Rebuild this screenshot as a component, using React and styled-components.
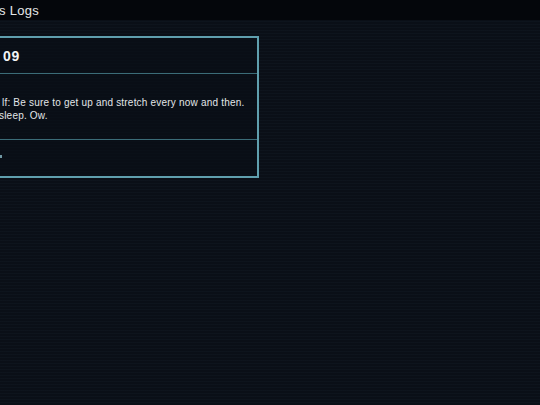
import React from 'react';
import styled, { createGlobalStyle } from 'styled-components';

const GlobalStyle = createGlobalStyle`
  html, body {
    margin: 0;
    padding: 0;
    height: 100%;
  }
  body {
    background-color: #0a0f17;
    background-image: repeating-linear-gradient(
      to bottom,
      rgba(120, 170, 200, 0.03) 0px,
      rgba(120, 170, 200, 0.03) 1px,
      transparent 1px,
      transparent 3px
    );
    color: #dfe3e6;
    font-family: "Liberation Sans", Arial, sans-serif;
    overflow: hidden;
  }
`;

const Screen = styled.div`
  display: flex;
  flex-direction: column;
  width: 540px;
  height: 405px;
  overflow: hidden;
`;

const TopBar = styled.header`
  height: 20px;
  flex-shrink: 0;
  display: flex;
  align-items: center;
  background: #04060b;
  color: #e4e6e8;
  font-size: 13px;
  letter-spacing: 0.3px;
  text-indent: -1px;
`;

const Content = styled.main`
  flex: 1;
  padding-top: 16px;
`;

const LogCard = styled.section`
  width: 277px;
  margin-left: -22px;
  border: 2px solid #5f9fae;
  background: rgba(8, 14, 22, 0.6);
  display: flex;
  flex-direction: column;
`;

const CardSection = styled.div`
  height: ${(p) => p.$height}px;
  display: flex;
  flex-direction: column;
  justify-content: ${(p) => (p.$center ? 'center' : 'flex-start')};
  padding-left: ${(p) => p.$indent || 22}px;
  box-sizing: border-box;
  border-top: ${(p) => (p.$divider ? '1px solid #3b6c78' : 'none')};
`;

const EntryTitle = styled.h2`
  margin: 0;
  font-size: 14px;
  font-weight: 700;
  letter-spacing: 0.8px;
  color: #f2f4f5;
`;

const EntryBody = styled.p`
  margin: 0;
  padding-top: 22px;
  font-size: 10px;
  line-height: 13px;
  letter-spacing: 0.2px;
  color: #e2e6e8;
  white-space: nowrap;
`;

const BodyLine = styled.span`
  display: block;
  margin-left: ${(p) => p.$shift || 0}px;
`;

const FooterMark = styled.span`
  display: block;
  width: 2px;
  height: 3px;
  margin-top: -3px;
  background: #6f97a3;
`;

export default function App() {
  return (
    <>
      <GlobalStyle />
      <Screen>
        <TopBar>s Logs</TopBar>
        <Content>
          <LogCard>
            <CardSection $height={35} $center $indent={23}>
              <EntryTitle>09</EntryTitle>
            </CardSection>
            <CardSection $height={66} $divider $indent={22}>
              <EntryBody>
                <BodyLine>lf: Be sure to get up and stretch every now and then.</BodyLine>
                <BodyLine $shift={-3}>sleep. Ow.</BodyLine>
              </EntryBody>
            </CardSection>
            <CardSection $height={37} $divider $center $indent={20}>
              <FooterMark />
            </CardSection>
          </LogCard>
        </Content>
      </Screen>
    </>
  );
}
